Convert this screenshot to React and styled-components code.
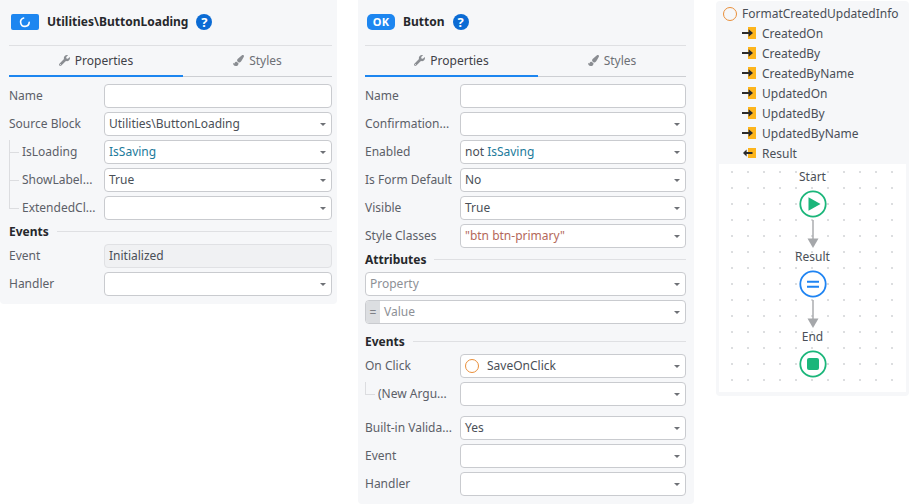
import React from "react";
import styled, { createGlobalStyle } from "styled-components";
import { FaWrench, FaPaintBrush } from "react-icons/fa";

const GlobalStyle = createGlobalStyle`
  html, body {
    margin: 0;
    background: #fff;
    font-family: "Noto Sans", "Open Sans", sans-serif;
    font-size: 12px;
    color: #4a4f57;
  }
`;

const blockRows = [
  { label: "Name", kind: "input" },
  { label: "Source Block", value: "Utilities\\ButtonLoading" },
  { label: "IsLoading", value: <Ident>IsSaving</Ident>, branch: "mid" },
  { label: "ShowLabel...", value: "True", branch: "mid" },
  { label: "ExtendedCl...", branch: "end" },
];

const buttonRows = [
  { label: "Name", kind: "input" },
  { label: "Confirmation..." },
  { label: "Enabled", value: <>not <Ident>IsSaving</Ident></> },
  { label: "Is Form Default", value: "No" },
  { label: "Visible", value: "True" },
  { label: "Style Classes", value: <Str>"btn btn-primary"</Str> },
];

const params = ["CreatedOn", "CreatedBy", "CreatedByName", "UpdatedOn", "UpdatedBy", "UpdatedByName"];

function Ident({ children }) {
  return <IdentText>{children}</IdentText>;
}

function Str({ children }) {
  return <StrText>{children}</StrText>;
}

function PropRow({ label, value, kind, branch, spaced }) {
  return (
    <Row $spaced={spaced}>
      <Label>
        {branch && <Branch $end={branch === "end"} />}
        <LabelText>{label}</LabelText>
      </Label>
      {kind === "input" ? <Field /> : <Select>{value}</Select>}
    </Row>
  );
}

function Select({ children }) {
  return (
    <Field>
      <FieldValue>{children}</FieldValue>
      <Caret />
    </Field>
  );
}

function Tabs({ activeWidth }) {
  return (
    <TabBar>
      <Tab $width={activeWidth} $active>
        <FaWrench size={11} color="#8a8d92" />
        Properties
      </Tab>
      <Tab>
        <FaPaintBrush size={11} color="#8a8d92" />
        Styles
      </Tab>
    </TabBar>
  );
}

function Help() {
  return <HelpBadge>?</HelpBadge>;
}

function Spinner() {
  return (
    <svg width="12" height="12" viewBox="0 0 12 12" fill="none">
      <path d="M4.6 2A4.3 4.3 0 1 0 10.2 6.4" stroke="#fff" strokeWidth="1.6" strokeLinecap="round" />
    </svg>
  );
}

function ParamIcon({ output }) {
  if (output) {
    return (
      <svg width="14" height="12" viewBox="0 0 14 12">
        <rect x="6" y="1" width="8" height="10" fill="#fdb51d" />
        <path d="M10.5 6H2.5" stroke="#2b2b2b" strokeWidth="2" />
        <path d="M4.6 2.6L1 6l3.6 3.4z" fill="#2b2b2b" />
      </svg>
    );
  }
  return (
    <svg width="14" height="12" viewBox="0 0 14 12">
      <rect x="6" y="0" width="8" height="12" fill="#fdb51d" />
      <path d="M0 6h8" stroke="#2b2b2b" strokeWidth="2" />
      <path d="M6.6 2.2L11 6l-4.4 3.8z" fill="#2b2b2b" />
    </svg>
  );
}

function FlowArrow() {
  return (
    <ArrowSvg width="12" height="28" viewBox="0 0 12 28">
      <path d="M6 0v19" stroke="#a5a7aa" strokeWidth="1.4" />
      <path d="M0.5 18.5h11L6 28z" fill="#a5a7aa" />
    </ArrowSvg>
  );
}

function StartNode() {
  return (
    <svg width="28" height="28" viewBox="0 0 28 28">
      <circle cx="14" cy="14" r="12.7" fill="#fff" stroke="#1bb67a" strokeWidth="1.8" />
      <path d="M9.5 7.2L21.5 14 9.5 20.8z" fill="#1bb67a" />
    </svg>
  );
}

function AssignNode() {
  return (
    <svg width="28" height="28" viewBox="0 0 28 28">
      <circle cx="14" cy="14" r="12.7" fill="#fff" stroke="#1f84f2" strokeWidth="1.8" />
      <path d="M8 10.8h12v1.9H8zM8 15.8h12v1.9H8z" fill="#1f84f2" />
    </svg>
  );
}

function EndNode() {
  return (
    <svg width="28" height="28" viewBox="0 0 28 28">
      <circle cx="14" cy="14" r="12.7" fill="#fff" stroke="#1bb67a" strokeWidth="1.8" />
      <rect x="8" y="8" width="12" height="12" rx="2" fill="#1bb67a" />
    </svg>
  );
}

export default function App() {
  return (
    <Page>
      <GlobalStyle />

      <Panel $width={337} $height={304} $left={9} $right={5}>
        <Header>
          <BlockBadge><Spinner /></BlockBadge>
          <Title>Utilities\ButtonLoading</Title>
          <Help />
        </Header>
        <Tabs activeWidth={174} />
        <Rows>
          {blockRows.map((r) => <PropRow key={r.label} {...r} />)}
          <Section>Events</Section>
          <Row>
            <Label><LabelText>Event</LabelText></Label>
            <Field $disabled><FieldValue>Initialized</FieldValue></Field>
          </Row>
          <PropRow label="Handler" />
        </Rows>
      </Panel>

      <Panel $width={336} $height={504} $left={7} $right={8}>
        <Header>
          <OkBadge>OK</OkBadge>
          <Title>Button</Title>
          <Help />
        </Header>
        <Tabs activeWidth={173} />
        <Rows>
          {buttonRows.map((r) => <PropRow key={r.label} {...r} />)}
          <Section>Attributes</Section>
          <Row>
            <Select><Muted>Property</Muted></Select>
          </Row>
          <Row>
            <Field>
              <Addon>=</Addon>
              <FieldValue><Muted>Value</Muted></FieldValue>
              <Caret />
            </Field>
          </Row>
          <Section $spaced>Events</Section>
          <Row>
            <Label><LabelText>On Click</LabelText></Label>
            <Field>
              <ActionDot />
              <FieldValue>SaveOnClick</FieldValue>
              <Caret />
            </Field>
          </Row>
          <PropRow label="(New Argu..." branch="end" />
          <PropRow label="Built-in Valida..." value="Yes" spaced />
          <PropRow label="Event" />
          <PropRow label="Handler" />
        </Rows>
      </Panel>

      <ActionPanel>
        <ActionTitle>
          <TitleDot />
          FormatCreatedUpdatedInfo
        </ActionTitle>
        {params.map((p) => (
          <Param key={p}><ParamIcon />{p}</Param>
        ))}
        <Param><ParamIcon output />Result</Param>
        <Canvas>
          <NodeLabel>Start</NodeLabel>
          <StartNode />
          <FlowArrow />
          <NodeLabel>Result</NodeLabel>
          <AssignNode />
          <FlowArrow />
          <NodeLabel>End</NodeLabel>
          <EndNode />
        </Canvas>
      </ActionPanel>
    </Page>
  );
}

const Page = styled.div`
  display: flex;
  align-items: flex-start;
  width: 909px;
  height: 504px;
  overflow: hidden;
`;

const Panel = styled.div`
  box-sizing: border-box;
  flex: none;
  width: ${(p) => p.$width}px;
  height: ${(p) => p.$height}px;
  padding: 0 ${(p) => p.$right}px 0 ${(p) => p.$left}px;
  background: #f6f7f9;
  border-radius: 0 0 4px 4px;
  & + & {
    margin-left: 21px;
  }
`;

const Header = styled.div`
  box-sizing: border-box;
  display: flex;
  align-items: center;
  height: 46px;
  padding: 0 0 2px 2px;
  border-bottom: 1px solid #dfe0e3;
`;

const BlockBadge = styled.div`
  display: flex;
  align-items: center;
  justify-content: center;
  width: 28px;
  height: 16px;
  background: #1d86f0;
  border-radius: 2px;
`;

const OkBadge = styled(BlockBadge)`
  border-radius: 5px;
  color: #fff;
  font-weight: 700;
  font-size: 11px;
  letter-spacing: 0.3px;
`;

const Title = styled.div`
  margin: 0 8px;
  font-weight: 700;
  color: #26282c;
`;

const HelpBadge = styled.div`
  display: flex;
  align-items: center;
  justify-content: center;
  width: 16px;
  height: 16px;
  border-radius: 50%;
  background: #0b6bd4;
  color: #fff;
  font-weight: 700;
  font-size: 13px;
`;

const TabBar = styled.div`
  display: flex;
  height: 31px;
  border-bottom: 1px solid #cdcfd3;
  box-sizing: border-box;
`;

const Tab = styled.div`
  box-sizing: content-box;
  display: flex;
  align-items: center;
  justify-content: center;
  gap: 5px;
  flex: ${(p) => (p.$width ? `0 0 ${p.$width}px` : "1")};
  height: 29px;
  color: ${(p) => (p.$active ? "#3f4147" : "#6d7076")};
  border-bottom: 2px solid ${(p) => (p.$active ? "#1d86f0" : "transparent")};
`;

const Rows = styled.div`
  display: flex;
  flex-direction: column;
  padding-top: 7px;
`;

const Row = styled.div`
  display: flex;
  height: 24px;
  margin-bottom: 4px;
  margin-top: ${(p) => (p.$spaced ? 6 : 0)}px;
`;

const Label = styled.div`
  display: flex;
  align-items: center;
  flex: 0 0 95px;
  color: #5c6068;
  white-space: nowrap;
`;

const LabelText = styled.span`
  padding-bottom: 2px;
`;

const Branch = styled.span`
  flex: none;
  align-self: flex-start;
  width: 10px;
  margin-right: 3px;
  height: ${(p) => (p.$end ? 13 : 28)}px;
  background:
    linear-gradient(#dcdde0, #dcdde0) 0 0 / 1px 100% no-repeat,
    linear-gradient(#dcdde0, #dcdde0) 0 12px / 100% 1px no-repeat;
`;

const Field = styled.div`
  box-sizing: border-box;
  flex: 1;
  display: flex;
  align-items: center;
  min-width: 0;
  height: 24px;
  background: ${(p) => (p.$disabled ? "#f0f1f3" : "#fff")};
  border: 1px solid ${(p) => (p.$disabled ? "#e0e1e4" : "#c9cbcf")};
  border-radius: 4px;
  overflow: hidden;
`;

const FieldValue = styled.span`
  flex: 1;
  padding: 0 0 2px 4px;
  color: #4a4f57;
  white-space: nowrap;
`;

const Caret = styled.span`
  flex: none;
  width: 0;
  height: 0;
  margin-right: 5px;
  border-left: 3px solid transparent;
  border-right: 3px solid transparent;
  border-top: 3px solid #6e7176;
`;

const IdentText = styled.span`
  color: #217a9b;
`;

const StrText = styled.span`
  color: #b4685a;
`;

const Muted = styled.span`
  color: #8d9096;
`;

const Addon = styled.span`
  flex: none;
  align-self: stretch;
  display: flex;
  align-items: center;
  justify-content: center;
  width: 14px;
  background: #dcdee1;
  color: #7d8086;
`;

const ActionDot = styled.span`
  flex: none;
  box-sizing: border-box;
  width: 14px;
  height: 14px;
  margin: 0 4px 0 4px;
  border: 1.5px solid #e98f3a;
  border-radius: 50%;
`;

const Section = styled.div`
  display: flex;
  align-items: center;
  gap: 8px;
  height: 14px;
  margin: ${(p) => (p.$spaced ? 6 : 0)}px 0 6px;
  font-weight: 700;
  color: #26282c;
  &::after {
    content: "";
    flex: 1;
    height: 1px;
    background: #dfe0e3;
  }
`;

const ActionPanel = styled.div`
  box-sizing: border-box;
  flex: none;
  width: 193px;
  height: 395px;
  margin-left: 22px;
  margin-top: 1px;
  padding: 3px 3px 3px;
  background: #f6f7f9;
  border-radius: 4px;
  display: flex;
  flex-direction: column;
`;

const ActionTitle = styled.div`
  display: flex;
  align-items: center;
  gap: 5px;
  height: 19px;
  padding-left: 4px;
  color: #4a4f57;
`;

const TitleDot = styled(ActionDot)`
  margin: 0;
`;

const Param = styled.div`
  display: flex;
  align-items: center;
  gap: 6px;
  height: 20px;
  padding-left: 23px;
  color: #4a4f57;
`;

const Canvas = styled.div`
  flex: none;
  display: flex;
  flex-direction: column;
  align-items: center;
  height: 228px;
  margin-top: 1px;
  padding-top: 4px;
  box-sizing: border-box;
  background-color: #fff;
  background-image: radial-gradient(circle, #d0d2d5 0.6px, transparent 1px);
  background-size: 16px 16px;
  background-position: 5px 0;
`;

const NodeLabel = styled.div`
  height: 15px;
  padding-top: 1px;
  line-height: 16px;
  margin-bottom: 6px;
  color: #4a4f57;
`;

const ArrowSvg = styled.svg`
  display: block;
  margin-top: 2px;
`;
